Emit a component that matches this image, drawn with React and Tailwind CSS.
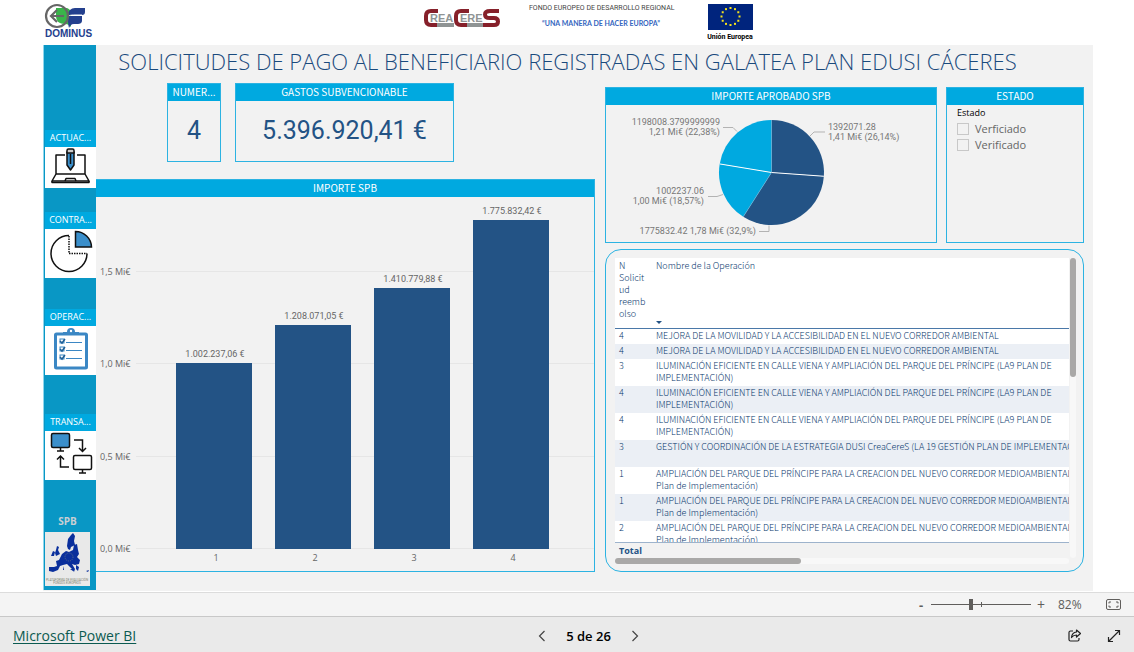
import React from 'react';

const PANEL_TITLE =
  "h-[17px] bg-[#00a9e0] text-center font-['Noto_Sans_CJK_SC',sans-serif] text-[10px] leading-[16px] text-white truncate px-1";

const BARS = [
  { label: '1', text: '1.002.237,06 €', x: 79, top: 166 },
  { label: '2', text: '1.208.071,05 €', x: 178, top: 128 },
  { label: '3', text: '1.410.779,88 €', x: 277, top: 91 },
  { label: '4', text: '1.775.832,42 €', x: 376, top: 23 },
];

const TICKS = [
  { text: '1,5 Mi€', y: 75 },
  { text: '1,0 Mi€', y: 167 },
  { text: '0,5 Mi€', y: 260 },
  { text: '0,0 Mi€', y: 352 },
];

const SLICES = [
  { share: 0.2614, color: '#235385' },
  { share: 0.329, color: '#235385' },
  { share: 0.1857, color: '#00a9e0' },
  { share: 0.2239, color: '#00a9e0' },
];

const ROWS = [
  ['4', 'MEJORA DE LA MOVILIDAD Y LA ACCESIBILIDAD EN EL NUEVO CORREDOR AMBIENTAL'],
  ['4', 'MEJORA DE LA MOVILIDAD Y LA ACCESIBILIDAD EN EL NUEVO CORREDOR AMBIENTAL'],
  ['3', 'ILUMINACIÓN EFICIENTE EN CALLE VIENA Y AMPLIACIÓN DEL PARQUE DEL PRÍNCIPE (LA9 PLAN DE', 'IMPLEMENTACIÓN)'],
  ['4', 'ILUMINACIÓN EFICIENTE EN CALLE VIENA Y AMPLIACIÓN DEL PARQUE DEL PRÍNCIPE (LA9 PLAN DE', 'IMPLEMENTACIÓN)'],
  ['4', 'ILUMINACIÓN EFICIENTE EN CALLE VIENA Y AMPLIACIÓN DEL PARQUE DEL PRÍNCIPE (LA9 PLAN DE', 'IMPLEMENTACIÓN)'],
  ['3', 'GESTIÓN Y COORDINACIÓN DE LA ESTRATEGIA DUSI CreaCereS (LA 19 GESTIÓN PLAN DE IMPLEMENTACIÓN)', '\u00a0'],
  ['1', 'AMPLIACIÓN DEL PARQUE DEL PRÍNCIPE PARA LA CREACION DEL NUEVO CORREDOR MEDIOAMBIENTAL (', 'Plan de Implementación)'],
  ['1', 'AMPLIACIÓN DEL PARQUE DEL PRÍNCIPE PARA LA CREACION DEL NUEVO CORREDOR MEDIOAMBIENTAL (', 'Plan de Implementación)'],
  ['2', 'AMPLIACIÓN DEL PARQUE DEL PRÍNCIPE PARA LA CREACION DEL NUEVO CORREDOR MEDIOAMBIENTAL (', 'Plan de Implementación)'],
];

function DominusLogo() {
  return (
    <svg viewBox="0 0 53 40" className="h-10 w-[53px] shrink-0" role="img" aria-label="Dominus">
      <path d="M13 8h11c3 1 4 3 4 6v13c-2-2-3-3-6-3-6 0-9-3-9-8z" fill="#39b54a" />
      <path d="M25 15c0-4 3-7 7-7h10v4c0 2-1 3-3 3z" fill="#24408e" />
      <path d="M25 16h14v5c0 2-2 3-4 3h-4c-3 0-4 2-5 4-1-3-1-7-1-12z" fill="#24408e" />
      <path d="M25 16c2-1 5-1 8-1h6" fill="none" stroke="#fff" strokeWidth="1" />
      <circle cx="14" cy="16" r="11" fill="none" stroke="#666" strokeWidth="2.2" />
      <path d="M21 16H8M14 10l-6 6 6 6" fill="none" stroke="#666" strokeWidth="2.2" />
      <text x="2" y="37" className="font-['Liberation_Sans',sans-serif] text-[10px] font-bold" fill="#24408e">
        DOMINUS
      </text>
    </svg>
  );
}

function CreaceresLogo() {
  return (
    <svg viewBox="0 0 78 22" className="h-[22px] w-[78px]" role="img" aria-label="CreaCereS">
      <path d="M13 15h18v4H13zM43 15h17v4H43z" fill="#8f9494" />
      <g fill="none" stroke="#86202a" strokeWidth="4">
        <path d="M15 3H8Q3 3 3 8v4q0 5 5 5h6" />
        <path d="M46 3h-8q-5 0-5 5v4q0 5 5 5h6" />
        <path d="M76 3h-9q-5 0-5 3.500t5 3.500h4q4 0 4 3.500t-4 3.500H60" />
      </g>
      <g className="font-['Liberation_Sans',sans-serif] text-[11px] font-bold" fill="#8f9494" stroke="#fff" strokeWidth="1" paintOrder="stroke">
        <text x="7" y="14">REA</text>
        <text x="37" y="14">ERE</text>
      </g>
    </svg>
  );
}

function EuFlag() {
  const stars = Array.from({ length: 12 }, (_, i) => {
    const a = (i * Math.PI) / 6;
    return [22.5 + 9 * Math.sin(a), 12.5 - 8.5 * Math.cos(a)];
  });
  return (
    <svg viewBox="0 0 45 26" className="h-[26px] w-[45px]" aria-hidden="true">
      <rect width="45" height="26" fill="#00247d" />
      {stars.map(([x, y], i) => (
        <rect key={i} x={x - 1} y={y - 1} width="2" height="2" fill="#f5e21c" />
      ))}
    </svg>
  );
}

function LaptopIcon() {
  return (
    <svg viewBox="0 0 49 41" className="h-[41px] w-full bg-white" aria-hidden="true">
      <g fill="none" stroke="#111" strokeWidth="1.500" strokeLinejoin="round">
        <path d="M19 8h-9v19M31 8h8v19M10 27h29l4 7H6z" />
        <path d="M6 34v1.500h37V34M19 34l1-2.500h9l1 2.500" />
        <path d="M21 5v13l3.500 5 3.500-5V5z" fill="#3b8fcb" />
        <path d="M21 6V3.500q0-1.500 1.500-1.500h4q1.500 0 1.500 1.500V6z" fill="#ccc" />
        <path d="M24.500 7v10" />
      </g>
    </svg>
  );
}

function PieIcon() {
  return (
    <svg viewBox="0 0 49 49" className="h-[49px] w-full bg-white" aria-hidden="true">
      <path d="M23 6.500A18 18 0 1 0 41 24.500" fill="none" stroke="#111" strokeWidth="1.500" />
      <path d="M23 7v17.500h18" fill="none" stroke="#111" strokeWidth="1.500" strokeDasharray="1.500 1" />
      <path d="M29.500 2.500A16 16 0 0 1 45.500 18h-16z" fill="#3b8fcb" stroke="#111" strokeWidth="1.500" />
    </svg>
  );
}

function ClipboardIcon() {
  return (
    <svg viewBox="0 0 49 49" className="h-[49px] w-full bg-white" aria-hidden="true">
      <rect x="9.500" y="8" width="31" height="34" rx="1" fill="#fff" stroke="#3b87c4" strokeWidth="3" />
      <path d="M17 9V6h4q0-4 4-4t4 4h4v3z" fill="#3b87c4" />
      <circle cx="25" cy="5" r="1.200" fill="#fff" />
      {[15, 23, 31].map((y) => (
        <g key={y} fill="none" stroke="#3b87c4">
          <rect x="14" y={y - 2} width="4" height="4" />
          <path d={`M14 ${y}l2 2 3-4`} strokeWidth="1.500" stroke="#1f5f96" />
          <path d={`M20 ${y + 1.5}h16`} />
        </g>
      ))}
    </svg>
  );
}

function ScreensIcon() {
  return (
    <svg viewBox="0 0 49 49" className="h-[49px] w-full bg-white" aria-hidden="true">
      <g fill="none" stroke="#111" strokeWidth="1.500">
        <rect x="5.500" y="2.500" width="18" height="14" rx="1.500" fill="#3b8fcb" />
        <path d="M14.500 16.500v3M11 20h7" />
        <rect x="27.500" y="24.500" width="18" height="14" rx="1.500" />
        <path d="M36.500 38.500v3M33 42h7" />
        <path d="M28 9h8.500v11M33 17l3.500 3.500L40 17" />
        <path d="M23 36h-8.500V25M11 28.500l3.500-3.500 3.500 3.500" />
      </g>
    </svg>
  );
}

function EuropeMap() {
  return (
    <svg viewBox="0 0 45 54" className="h-[54px] w-[45px] bg-[#e9e9e9]" aria-hidden="true">
      <g fill="#0a2f9c">
        <path d="M22 14l1-7 3-4 2-2 2 3-1 5 1 4-4 2-1 3-2-1z" />
        <path d="M12 14l2 1-1 3 2 4-4 2-1-3 1-3zM8 19l2 1-1 4-3 0z" />
        <path d="M17 22l4-3 3 1 4-2 1-5 3-1 1 6 1 4-2 3 3 3-1 4-4 1-3-1 3 5-1 3-2-3-5-5-4 1-3 1-2 4-5 2-4-1 0-4 5 0 3-1-1-5 3-1z" />
        <path d="M25 37l4 0-1 2zM31 33l3 2-1 4-2-2zM41 39l3-1-1 2zM18 34l1 4-1 0z" />
      </g>
      <circle cx="24" cy="25" r="4" fill="none" stroke="#54688e" strokeDasharray="1 1" />
      <g className="font-[Roboto,sans-serif] text-[3px]" fill="#7d836e" textAnchor="middle">
        <text x="22" y="49">PLATAFORMA DE EVALUACIÓN</text>
        <text x="22" y="52">FONDOS EUROPEOS</text>
      </g>
    </svg>
  );
}

function NavItem({ label, className, children }) {
  return (
    <a href="#" className={`ml-px block ${className}`}>
      <span className="block h-[17px] truncate bg-[#00a9e0] text-center text-[9px] leading-[16px] text-white">
        {label}
      </span>
      {children}
    </a>
  );
}

function Sidebar() {
  return (
    <nav className="mb-px flex flex-col border-l border-[#8fd6ec] bg-[#0997c5]">
      <NavItem label="ACTUAC..." className="mt-[85px]"><LaptopIcon /></NavItem>
      <NavItem label="CONTRA..." className="mt-6"><PieIcon /></NavItem>
      <NavItem label="OPERAC..." className="mt-[31px]"><ClipboardIcon /></NavItem>
      <NavItem label="TRANSA..." className="mt-[39px]"><ScreensIcon /></NavItem>
      <a href="#" className="mt-8 flex flex-col items-start pl-px">
        <span className="h-5 w-[45px] text-center text-[10px] font-bold leading-[18px] text-[#c9cfd3]">SPB</span>
        <EuropeMap />
      </a>
    </nav>
  );
}

function BarChart() {
  return (
    <section className="border border-l-0 border-[#2cb3e2]">
      <h2 className={PANEL_TITLE}>IMPORTE SPB</h2>
      <svg viewBox="0 0 498 374" className="block h-auto w-full" role="img" aria-label="Importe SPB">
        {TICKS.map((t) => (
          <g key={t.y}>
            <path d={`M40 ${t.y - 0.5}H498`} stroke="#e6e6e6" />
            <text x="4" y={t.y + 3} fill="#666" className="text-[9px]">{t.text}</text>
          </g>
        ))}
        {BARS.map((b) => (
          <g key={b.label} textAnchor="middle" fill="#666">
            <rect x={b.x + 1} y={b.top} width="76" height={352 - b.top} fill="#235385" />
            <text x={b.x + 40} y={b.top - 6} className="font-[Roboto,sans-serif] text-[9px]">{b.text}</text>
            <text x={b.x + 41} y="364" className="text-[9px]">{b.label}</text>
          </g>
        ))}
      </svg>
    </section>
  );
}

function PieChart() {
  const cx = 165.5;
  const cy = 67.5;
  const r = 52.5;
  const at = (f) => {
    const a = f * 2 * Math.PI;
    return `${(cx + r * Math.sin(a)).toFixed(2)} ${(cy - r * Math.cos(a)).toFixed(2)}`;
  };
  let sum = 0;
  return (
    <section className="border border-[#2cb3e2]">
      <h2 className={PANEL_TITLE}>IMPORTE APROBADO SPB</h2>
      <svg viewBox="0 0 330 137" className="block h-auto w-full" role="img" aria-label="Importe aprobado SPB">
        {SLICES.map((s, i) => {
          const from = sum;
          sum += s.share;
          return (
            <path
              key={i}
              d={`M${cx} ${cy}L${at(from)}A${r} ${r} 0 0 1 ${at(sum)}z`}
              fill={s.color}
            />
          );
        })}
        <path d={`M${cx} ${cy}L${at(0.2614)}M${cx} ${cy}L${at(0.7761)}`} stroke="#fff" />
        <path d={`M${cx} ${cy}L${at(0)}M${cx} ${cy}L${at(0.5904)}`} stroke="#7fb7d8" strokeWidth="0.500" />
        <g fill="none" stroke="#b3b3b3">
          <path d="M117 22.500h10l4 4M219 27h-11l-4 4M102 91.500h9l6-2M153 126.500h10v-6" />
        </g>
        <g fill="#777" className="font-[Roboto,sans-serif] text-[9px]">
          <g textAnchor="end">
            <text x="114" y="20">1198008.3799999999</text>
            <text x="114" y="30">1,21 Mi€ (22,38%)</text>
            <text x="98" y="89">1002237.06</text>
            <text x="98" y="99">1,00 Mi€ (18,57%)</text>
            <text x="150" y="129">1775832.42 1,78 Mi€ (32,9%)</text>
          </g>
          <text x="222" y="25">1392071.28</text>
          <text x="222" y="35">1,41 Mi€ (26,14%)</text>
        </g>
      </svg>
    </section>
  );
}

function StatusFilter() {
  return (
    <section className="border border-[#2cb3e2]">
      <h2 className={PANEL_TITLE}>ESTADO</h2>
      <fieldset className="px-[10px]">
        <legend className="pb-[2px] pt-[2px] text-[9px] leading-3 text-black">Estado</legend>
        {['Verficiado', 'Verificado'].map((name, i) => (
          <label key={i} className="flex h-4 items-center gap-[6px] text-[11px] leading-4 text-[#666]">
            <input type="checkbox" className="size-3 appearance-none border border-[#c8c8c8] checked:bg-[#235385]" />
            {name}
          </label>
        ))}
      </fieldset>
    </section>
  );
}

function OperationsTable() {
  return (
    <section className="rounded-[16px] border border-[#2cb3e2] px-[9px] pb-[7px] pt-2">
      <div className="-mr-[2px] flex gap-px">
        <div className="min-w-0 flex-1 overflow-hidden">
          <div className="h-[285px] overflow-hidden border-b border-[#9db3cc] bg-white">
            <table className="w-full table-fixed border-collapse text-left font-['Noto_Sans_CJK_SC',sans-serif] text-[9px] font-light leading-3 text-[#05356b]">
              <thead>
                <tr className="h-[70px] border-b border-[#4a78a8]">
                  <th scope="col" className="w-[37px] pl-1 pt-[2px] align-top font-light">
                    N<br />Solicit<br />ud<br />reemb<br />olso
                  </th>
                  <th scope="col" className="pl-1 pt-[2px] align-top font-light">
                    <span className="flex h-[66px] flex-col justify-between">
                      Nombre de la Operación
                      <svg viewBox="0 0 6 3" className="mb-[2px] h-[3px] w-[6px]" aria-hidden="true">
                        <path d="M0 0h6L3 3z" fill="#235385" />
                      </svg>
                    </span>
                  </th>
                </tr>
              </thead>
              <tbody>
                {ROWS.map(([n, ...lines], i) => (
                  <tr key={i} className="odd:bg-white even:bg-[#ebeff5]">
                    <td className="py-px pb-[2px] pl-1 align-top">{n}</td>
                    <td className="whitespace-nowrap py-px pb-[2px] pl-1 align-top">
                      {lines.map((line, j) => (
                        <span key={j} className="block">{line}</span>
                      ))}
                    </td>
                  </tr>
                ))}
              </tbody>
            </table>
          </div>
          <p className="pl-1 text-[9px] font-bold leading-[15px] text-[#235385]">Total</p>
          <div className="h-[6px] rounded-full bg-[#f8f8f8]">
            <div className="h-[6px] w-[41%] rounded-full bg-[#a9a8a7]" />
          </div>
        </div>
        <div className="mb-[6px] w-[6px] rounded-full bg-[#f8f8f8]">
          <div className="h-[119px] rounded-full bg-[#a9a8a7]" />
        </div>
      </div>
    </section>
  );
}

function ZoomBar() {
  return (
    <div className="flex h-6 items-center justify-end border-t border-[#dcdcdc] bg-[#f4f4f4] pr-[13px] text-[#605e5c]">
      <button type="button" aria-label="Alejar" className="w-3 text-left text-[13px] font-bold leading-4">-</button>
      <div className="relative flex w-[100px] items-center">
        <input
          type="range"
          aria-label="Zoom"
          defaultValue="40"
          className="h-3 w-full appearance-none bg-transparent [&::-webkit-slider-runnable-track]:h-px [&::-webkit-slider-runnable-track]:bg-[#605e5c] [&::-webkit-slider-thumb]:-mt-[5px] [&::-webkit-slider-thumb]:h-[11px] [&::-webkit-slider-thumb]:w-1 [&::-webkit-slider-thumb]:appearance-none [&::-webkit-slider-thumb]:bg-[#605e5c]"
        />
        <span className="pointer-events-none absolute left-1/2 h-[5px] w-px bg-[#605e5c]" />
      </div>
      <button type="button" aria-label="Acercar" className="ml-1 w-3 text-[14px] leading-4">+</button>
      <span className="ml-[11px] w-6 text-[12px] leading-4">82%</span>
      <button type="button" aria-label="Ajustar a la página" className="ml-6">
        <svg viewBox="0 0 15 11" className="h-[11px] w-[15px]" fill="none" stroke="#605e5c" aria-hidden="true">
          <rect x="0.500" y="0.500" width="14" height="10" rx="1.500" />
          <path d="M5 3H3v1.500M10 3h2v1.500M5 8H3V6.500M10 8h2V6.500" />
        </svg>
      </button>
    </div>
  );
}

function Footer() {
  return (
    <footer className="grid h-9 grid-cols-[524fr_auto_481fr] items-center border-t border-[#c8c8c8] bg-[#eaeaea] px-[13px] pt-[2px]">
      <a href="#" className="text-[14px] leading-5 text-[#0b5a50] underline underline-offset-2">Microsoft Power BI</a>
      <div className="flex items-center gap-5 text-[13px] font-semibold leading-5 text-black">
        <button type="button" aria-label="Página anterior">
          <svg viewBox="0 0 8 12" className="h-3 w-2" fill="none" stroke="#444" strokeWidth="1.200" aria-hidden="true"><path d="M6.500 1l-5 5 5 5" /></svg>
        </button>
        <span>5 de 26</span>
        <button type="button" aria-label="Página siguiente">
          <svg viewBox="0 0 8 12" className="h-3 w-2" fill="none" stroke="#444" strokeWidth="1.200" aria-hidden="true"><path d="M1.500 1l5 5-5 5" /></svg>
        </button>
      </div>
      <div className="flex items-center justify-end gap-[26px]">
        <button type="button" aria-label="Compartir">
          <svg viewBox="0 0 13 13" className="size-[13px]" fill="none" stroke="#222" strokeWidth="1.200" strokeLinejoin="round" aria-hidden="true">
            <path d="M5 2H2.500Q1 2 1 3.500v7Q1 12 2.500 12h7q1.500 0 1.500-1.500V9" />
            <path d="M8.500 1l4 3.500-4 3.500V6Q5.500 6 3.500 8.500 4 3.500 8.500 3z" />
          </svg>
        </button>
        <button type="button" aria-label="Pantalla completa">
          <svg viewBox="0 0 14 14" className="size-[14px]" fill="none" stroke="#222" strokeWidth="1.200" aria-hidden="true">
            <path d="M1.500 12.500l11-11M8 1.500h4.500V6M1.500 8v4.500H6" />
          </svg>
        </button>
      </div>
    </footer>
  );
}

export default function App() {
  return (
    <div className="flex min-h-screen flex-col bg-white font-['Open_Sans','Noto_Sans',sans-serif]">
      <main className="flex-1 pl-[43px] pr-[41px]">
        <header className="flex h-[45px] items-start">
          <DominusLogo />
          <div className="ml-[327px] mt-2"><CreaceresLogo /></div>
          <div className="ml-7 mt-1 w-[144px] whitespace-nowrap text-center text-[7px] leading-[8px]">
            <p className="font-[Roboto,sans-serif] text-[#444]">FONDO EUROPEO DE DESARROLLO REGIONAL</p>
            <p className="mt-[7px] font-[Lato,sans-serif] font-bold text-[#3566c0]">“UNA MANERA DE HACER EUROPA”</p>
          </div>
          <div className="ml-8 mt-1 flex w-[50px] flex-col items-center">
            <EuFlag />
            <span className="whitespace-nowrap pt-[3px] font-[Roboto,sans-serif] text-[7px] font-bold leading-[8px] text-black">Unión Europea</span>
          </div>
        </header>
        <div className="grid grid-cols-[53px_1fr] bg-[#f2f2f2]">
          <Sidebar />
          <div className="pb-[19px]">
            <h1 className="h-[38px] pr-[54px] text-center text-[22px] font-light leading-[33px] text-[#1a4a7d]">
              SOLICITUDES DE PAGO AL BENEFICIARIO REGISTRADAS EN GALATEA PLAN EDUSI CÁCERES
            </h1>
            <div className="grid grid-cols-[499fr_479fr] items-start gap-[10px] pr-[9px]">
              <div className="flex flex-col gap-[17px]">
                <div className="flex gap-[14px] pl-[71px] text-[#235385]">
                  <section className="w-[54px] border border-[#2cb3e2]">
                    <h2 className={PANEL_TITLE}>NUMER...</h2>
                    <p className="text-center font-[Roboto,sans-serif] text-[25px] leading-[60px]">4</p>
                  </section>
                  <section className="w-[219px] border border-[#2cb3e2]">
                    <h2 className={PANEL_TITLE}>GASTOS SUBVENCIONABLE</h2>
                    <p className="text-center font-[Roboto,sans-serif] text-[25px] leading-[60px]">5.396.920,41 €</p>
                  </section>
                </div>
                <BarChart />
              </div>
              <div className="flex flex-col gap-[6px] pt-1">
                <div className="grid grid-cols-[332fr_138fr] gap-[9px]">
                  <PieChart />
                  <StatusFilter />
                </div>
                <OperationsTable />
              </div>
            </div>
          </div>
        </div>
      </main>
      <ZoomBar />
      <Footer />
    </div>
  );
}
